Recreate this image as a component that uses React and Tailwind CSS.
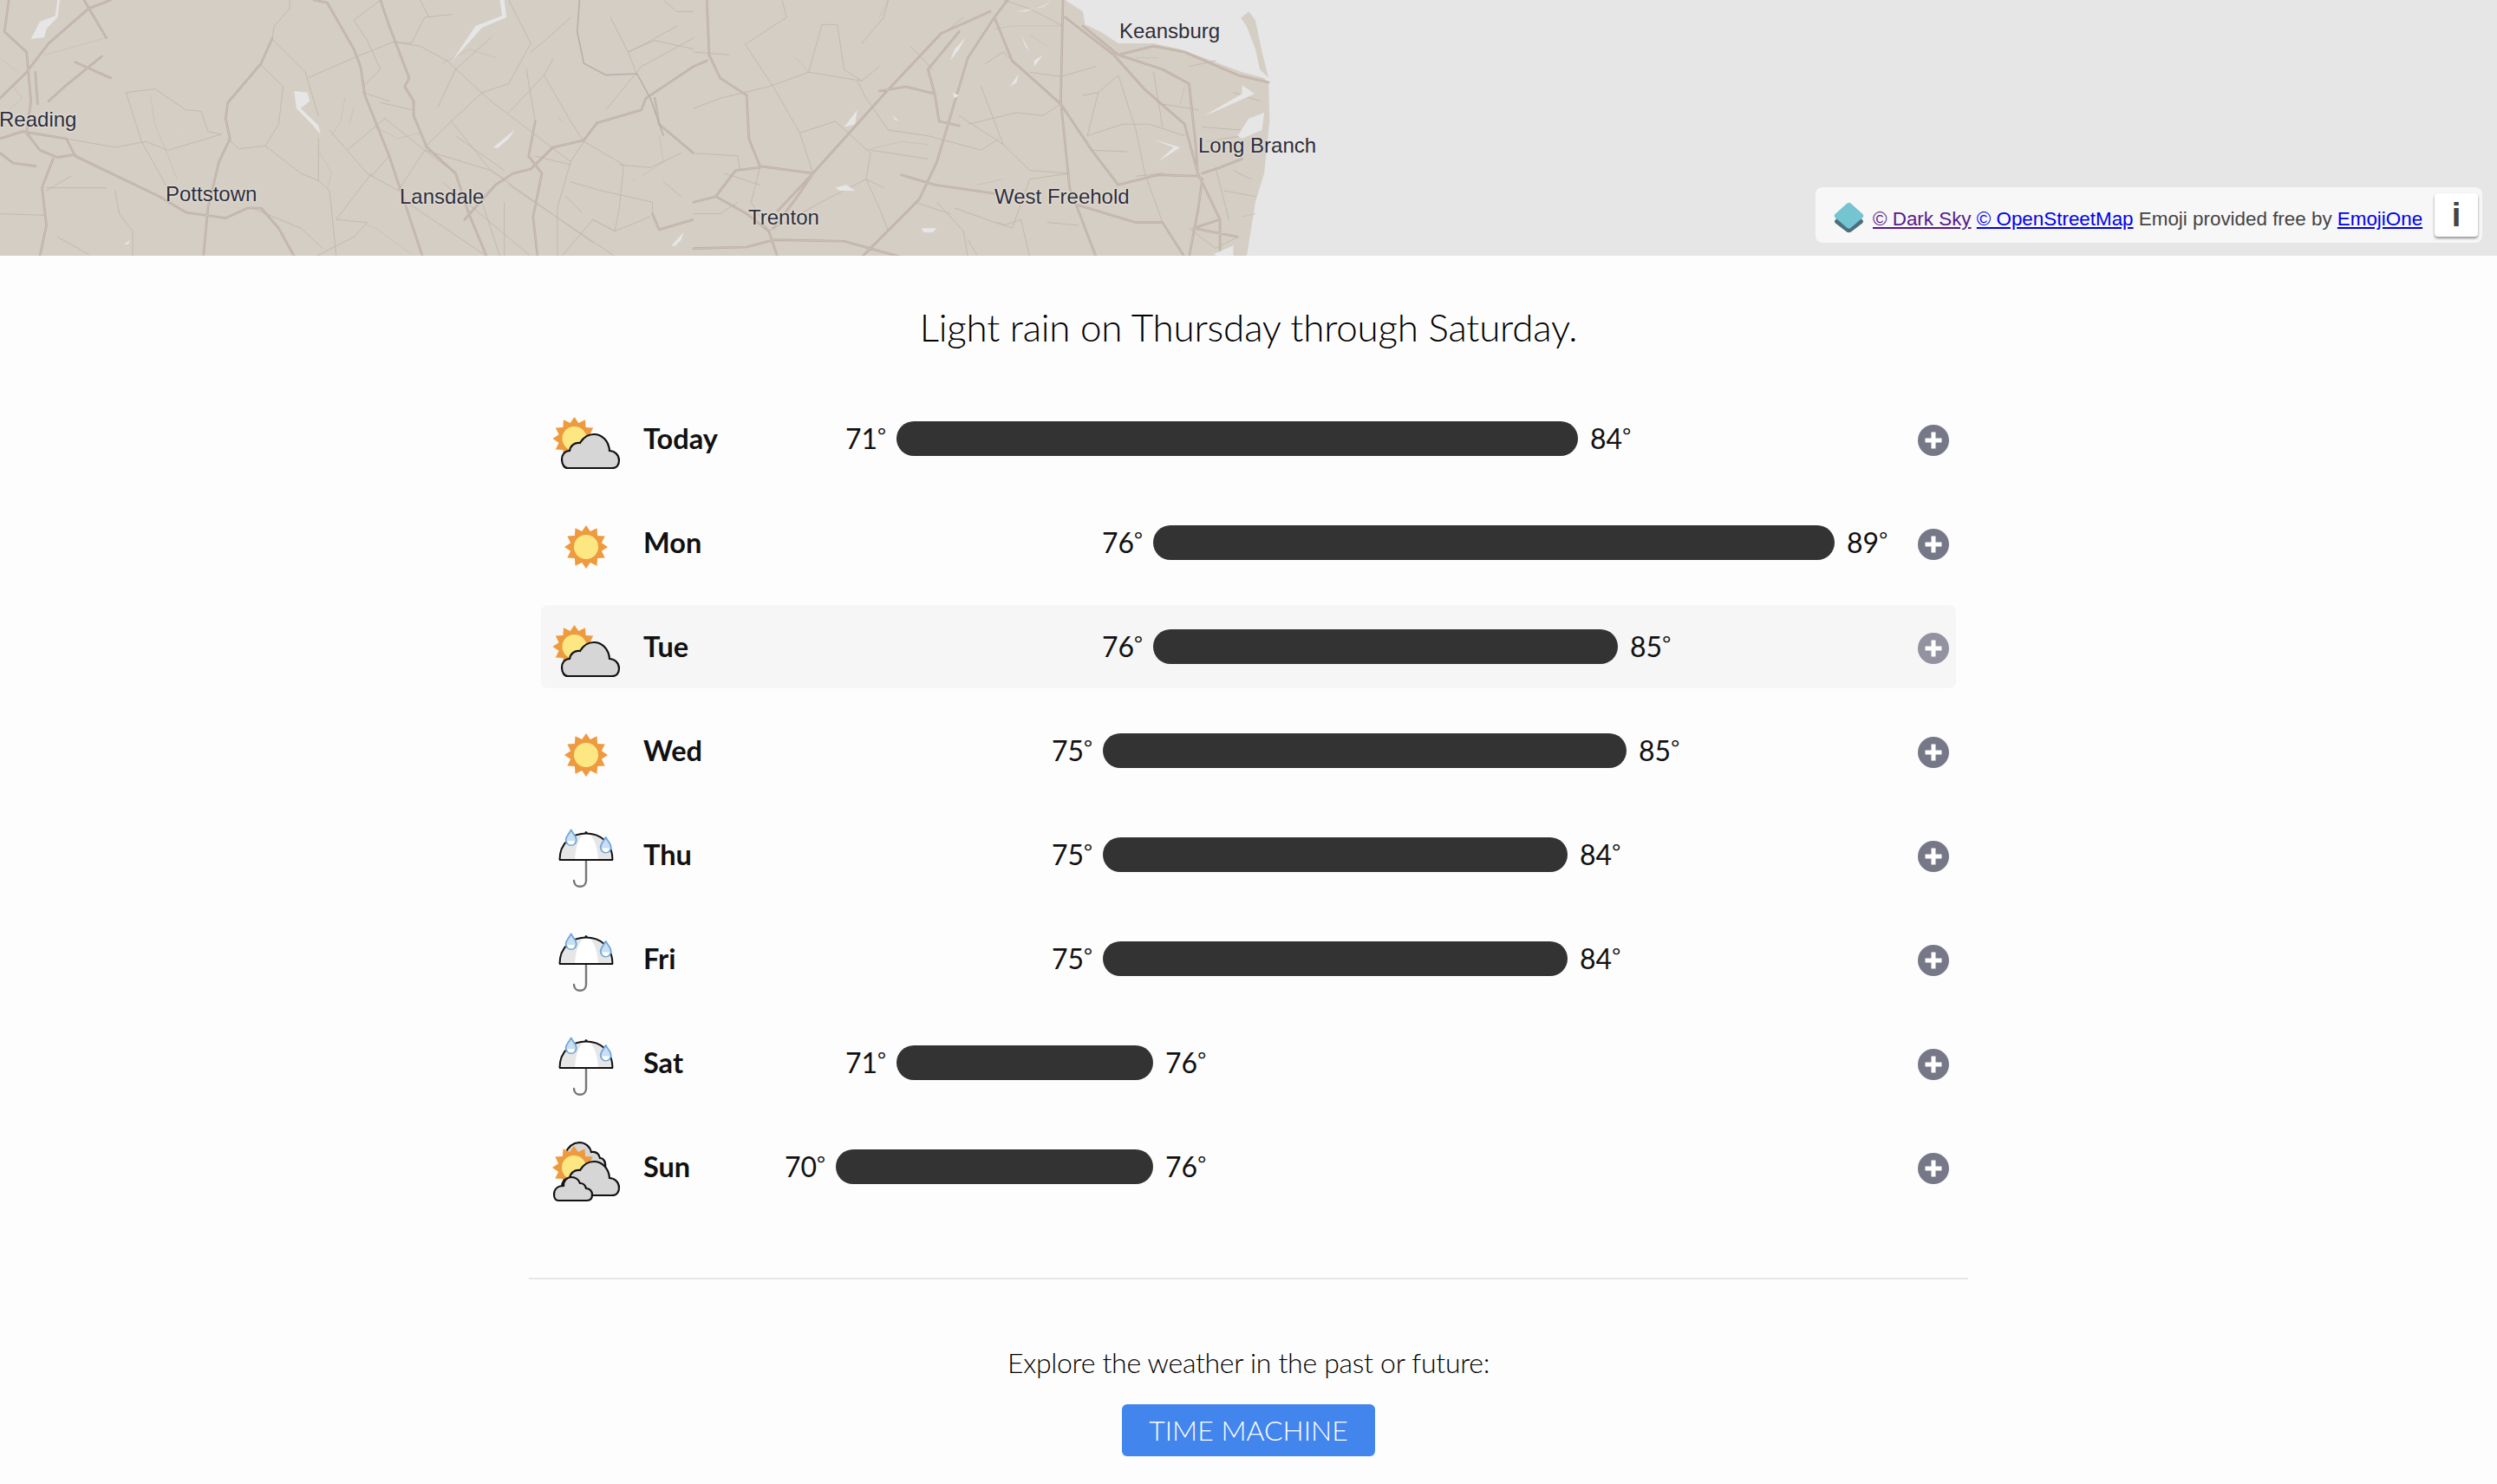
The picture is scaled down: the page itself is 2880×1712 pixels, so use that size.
import React from 'react';

// map traces, in the coordinates of two 800px-wide tiles (x / 1.96, y / 3)
const westMajor = 'M0 340L60 250L110 150L200 30L250 0M190 0L240 130M20 0L10 110L60 180L70 350L60 460M80 250L85 360M170 215L250 270M110 350L150 295L230 195M0 480L50 455L150 480L170 540L360 680L420 735L510 755L560 720L590 720L630 790L665 887M60 460L90 520L130 545L170 535M0 530L30 565L80 575M120 550L95 650L105 780L90 887M615 135L590 220L515 355L510 410L520 480L495 560L470 720L460 887M710 0L740 10L800 170L815 230L825 330L880 540L955 887M860 0L880 90L925 270L915 300L935 350L935 400L965 510L1030 600L1060 740L1100 887M1050 760L1120 640L1160 600L1200 585L1250 510L1320 485L1350 425L1450 380L1460 340L1568 230M1210 420L1195 540L1225 600L1205 750L1215 887M1475 740L1490 795L1568 760M1480 340L1490 430L1568 530';
const westMinor = 'M285 320L350 308L420 380L455 385L470 455L500 465M150 480L260 510L330 490L380 520L500 465M285 320L320 490L375 640M620 90L655 30L655 0M620 90L615 135L690 250L720 400M590 225L640 300L630 430L600 505L540 515L515 480M695 270L800 200L890 145L950 160L1010 210L1110 350L1290 560M890 145L930 150L960 60L1020 50M600 505L680 600L720 625L745 660L760 887M720 480L720 625M745 450L830 600L900 660M870 410L960 520L1110 590M860 355L930 380M820 320L880 350M785 520L870 410M990 370L1030 240L1110 130M1020 420L1090 320L1150 290L1200 150L1150 0M1020 420L960 510M1020 420L1110 590L1140 620M1150 390L1230 260L1250 205M1190 240L1210 420M1230 260L1290 420L1320 490L1290 560L1260 720L1260 887M1320 490L1410 570L1400 720L1390 800L1340 760L1270 887M1370 380L1450 230L1570 130M1420 180L1480 140L1568 170M1400 570L1470 580L1540 530M900 660L960 520L1030 600M840 600L760 760L830 770L800 820L715 887M880 540L840 610M920 700L1100 887M1000 630L1200 887M1110 590L1340 840M1150 640L1390 887M1280 680L1315 735M1290 630L1360 660L1475 700L1475 740M260 660L270 740L300 800L300 887M0 740L100 745M105 650L240 650M160 610L105 660M130 820L200 880M570 720L680 790L730 860M860 0L800 70L830 140L860 240L820 300M950 0L970 60M1290 60L1240 130L1200 180M1380 60L1420 180L1440 260M1500 0L1530 40L1568 40M1530 90L1460 150L1420 180M1030 470L1140 590M1210 540L1290 570M1340 760L1390 800L1470 750M1500 630L1540 680M1090 700L1130 887M1140 700L1140 887';
const westFaint = 'M340 330L350 430L380 540L400 620M100 190L150 170L240 130M0 200L40 250M30 300L50 340L20 380M780 340L770 420L750 470M800 370L790 430M850 440L900 480L950 460M720 520L750 600L740 650M930 880L850 790L830 780M1260 400L1270 420M1430 620L1435 630M1490 470L1500 560L1450 610M1120 200L1060 170L1000 220';
const westWater = 'M70 135L90 75L125 55L130 0L135 0L130 60L105 100L100 130ZM1020 215L1075 90L1135 55L1130 0L1140 0L1145 60L1090 95L1035 190ZM665 315L695 320L700 350L680 375L720 435L725 465L705 430L670 375ZM1115 510L1165 448L1150 480L1125 512ZM1518 850L1545 805L1540 830L1525 852ZM395 465L405 455L398 463ZM280 845L295 830L290 845Z';

const eastMajor = 'M30 0L35 190L60 270L120 330L125 480L150 575L270 600L230 690L180 790M0 230L30 210M0 700L50 680L95 590L150 580M50 680L120 740L170 800L190 890M0 860L120 855L180 830L340 835L470 890M670 40L560 115L440 310L270 600L190 730M710 0L680 60L620 200L550 560L510 690L380 890M680 60L720 210L830 360L900 520L960 640M835 0L830 350L850 650L870 730L910 890M420 315L480 300L545 325L555 420L600 435M545 325L530 240L600 110M470 605L545 640L680 670M870 710L1000 770L1060 770L1110 890M960 640L1050 605L1140 610L1150 620L1140 730L1120 890M840 60L950 190L1020 310L1110 430L1140 600L1190 760L1190 890M880 90L960 190L1060 240L1120 290L1135 500L1140 610M960 190L1040 160L1110 180L1230 260L1300 285M1130 790L1230 820M1130 790L1190 760M1150 600L1190 580L1240 550';
const eastMinor = 'M115 150L180 300L240 460L270 600M260 250L290 85L325 85L340 240L380 280L420 230M0 375L60 340L170 300L260 250L380 280M370 280L390 340L440 450L530 470L650 520L690 480M400 520L530 550M320 420L400 530L390 620L420 720M150 580L130 700L170 800L300 690L390 620L430 650M0 530L100 540L105 590M490 160L540 240M600 400L700 500L760 590L850 600M650 300L700 500M660 220L700 180L720 210M760 250L830 265L910 230M620 430L730 390L790 400L830 360M880 330L915 320L890 470L970 430L1030 430L1110 470M915 320L960 260L1000 450L1020 600L1060 770M900 520L980 525M690 770L720 790L760 620L850 600M590 720L700 780L740 760L760 890M550 700L610 800L620 890M1040 250L1060 440M1120 230L1180 210M1150 440L1240 450M1180 580L1210 760M1060 360L1140 380M1220 590L1260 620M1120 790L1180 860L1230 820M700 0L760 30L835 90M570 110L610 60M440 0L430 60L380 150M200 0L210 60L120 150M0 180L80 190M240 460L320 420M150 640L70 600M0 740L60 740L100 700M420 720L440 800M500 700L580 740M1000 610L1060 600M640 880L620 830M1220 320L1280 350M1160 490L1240 470M1200 660L1270 680M800 770L870 780';
const eastFaint = 'M390 520L470 490L530 500M680 100L720 90L830 90M760 120L800 160M420 60L440 0M1240 750L1270 740M1000 200L1050 200M1110 300L1100 360M640 640L700 620M230 200L260 250';
const eastWater = 'M1155 400L1240 325L1240 295L1268 325L1180 385ZM1230 470L1255 410L1290 390L1285 450L1240 480ZM1035 480L1100 510L1050 560L1085 510ZM320 650L345 640L365 660L330 660ZM515 790L550 790L540 805L520 805ZM585 320L600 330L590 340ZM715 300L735 255L730 285ZM590 170L615 130L600 170L580 210ZM340 440L370 380L365 430ZM730 40L790 25L810 0L790 20L750 40ZM1175 880L1220 850L1220 890L1190 890ZM740 120L760 180L750 160ZM450 400L465 420L455 415ZM770 210L790 190L770 230Z';
const eastLand = 'M0 0H840L880 40L885 85L920 110L960 150L1040 150L1100 170L1180 215L1240 250L1290 270L1300 290L1302 420L1290 600L1270 700L1250 890H0ZM1237 62L1255 40L1270 70L1285 180L1300 270L1280 240L1270 170L1250 90Z';

const mapLabels = [
  { name: 'Reading', pos: 'left-[-1px] top-[124px]' },
  { name: 'Pottstown', pos: 'left-[191px] top-[210px]' },
  { name: 'Lansdale', pos: 'left-[461px] top-[213px]' },
  { name: 'Trenton', pos: 'left-[863px] top-[237px]' },
  { name: 'West Freehold', pos: 'left-[1147px] top-[213px]' },
  { name: 'Keansburg', pos: 'left-[1291px] top-[22px]' },
  { name: 'Long Branch', pos: 'left-[1382px] top-[154px]' },
];

const days = [
  { day: 'Today', icon: 'partly', low: 71, high: 84, left: 1034, right: 1820 },
  { day: 'Mon', icon: 'sun', low: 76, high: 89, left: 1330, right: 2116 },
  { day: 'Tue', icon: 'partly', low: 76, high: 85, left: 1330, right: 1866, active: true },
  { day: 'Wed', icon: 'sun', low: 75, high: 85, left: 1272, right: 1876 },
  { day: 'Thu', icon: 'rain', low: 75, high: 84, left: 1272, right: 1808 },
  { day: 'Fri', icon: 'rain', low: 75, high: 84, left: 1272, right: 1808 },
  { day: 'Sat', icon: 'rain', low: 71, high: 76, left: 1034, right: 1330 },
  { day: 'Sun', icon: 'cloudy', low: 70, high: 76, left: 964, right: 1330 },
];

const Roads = ({ major, minor, faint, water }) => (
  <g fill="none" strokeLinejoin="round" strokeLinecap="round">
    <path d={faint} stroke="#cabfb5" strokeWidth="0.9" vectorEffect="non-scaling-stroke" />
    <path d={minor} stroke="#c2b6ac" strokeWidth="0.9" vectorEffect="non-scaling-stroke" />
    <path d={major} stroke="#bdaea5" strokeWidth="2.6" vectorEffect="non-scaling-stroke" />
    <path d={major} stroke="#d0c6bc" strokeWidth="0.8" vectorEffect="non-scaling-stroke" />
    <path d={water} fill="#e6e6e6" stroke="none" />
  </g>
);

const MapDrawing = () => (
  <svg className="absolute inset-0" width="2880" height="295">
    <rect x="0" y="0" width="800" height="295" fill="#d5cec4" />
    <g transform="scale(0.5102 0.3333)">
      <Roads major={westMajor} minor={westMinor} faint={westFaint} water={westWater} />
      <path
        d="M1310 0L1305 110L1320 220L1370 260L1440 255L1470 340L1500 470"
        fill="none"
        stroke="#b3b1ad"
        strokeWidth="1.6"
        vectorEffect="non-scaling-stroke"
      />
    </g>
    <g transform="translate(800 0) scale(0.5102 0.3333)">
      <path d={eastLand} fill="#d5cec4" />
      <Roads major={eastMajor} minor={eastMinor} faint={eastFaint} water={eastWater} />
    </g>
  </svg>
);

const sunPoints = (cx, cy, outer, inner) => {
  const pts = [];
  for (let i = 0; i < 24; i++) {
    const r = i % 2 === 0 ? outer : inner;
    const a = (i * Math.PI) / 12 - Math.PI / 2;
    pts.push(`${(cx + r * Math.cos(a)).toFixed(1)},${(cy + r * Math.sin(a)).toFixed(1)}`);
  }
  return pts.join(' ');
};

const Sun = ({ cx, cy }) => (
  <g>
    <polygon points={sunPoints(cx, cy, 25, 18.5)} fill="#ee9a3e" />
    <circle cx={cx} cy={cy} r="14" fill="#fde783" />
  </g>
);

const bigCloud = 'M19 69H70C76 69 78 64 78 60C78 54 73 49 67 49C66 37 58 30 49 30C41 30 36 35 33 40C27 39 22 43 21 49C15 49 12 54 12 59C12 65 15 69 19 69Z';

const Drop = ({ x, y }) => (
  <g>
    <path
      d={`M${x} ${y}C${x + 1} ${y + 4} ${x + 6} ${y + 7} ${x + 6} ${y + 12}A6 6 0 0 1 ${x - 6} ${y + 12}C${x - 6} ${y + 7} ${x - 1} ${y + 4} ${x} ${y}Z`}
      fill="#c9dff1"
      stroke="#6fa7da"
      strokeWidth="1.8"
    />
    <path d={`M${x - 4.5} ${y + 13}H${x + 4.5}A4.5 4.5 0 0 1 ${x - 4.5} ${y + 13}Z`} fill="#ffffff" />
  </g>
);

const WeatherIcon = ({ type }) => (
  <svg className="mt-[10px] shrink-0" width="80" height="80" viewBox="0 0 80 80">
    {type === 'sun' && <Sun cx={40} cy={40} />}
    {type === 'partly' && (
      <g>
        <Sun cx={26.500} cy={35} />
        <path d={bigCloud} fill="#d6d6d6" stroke="#111111" strokeWidth="2.2" />
      </g>
    )}
    {type === 'rain' && (
      <g>
        <path d="M40 41V65C40 74 26 74 26 65" fill="none" stroke="#777777" strokeWidth="2.4" strokeLinecap="round" />
        <path d="M9.5 41C9.5 21 24 10.5 40 10.5C56 10.5 70.500 21 70.500 41Z" fill="#e6e6e6" />
        <path d="M27 41C28 22 34 11 40 11C47 11 53 22 54 41Z" fill="#ffffff" />
        <path d="M9.5 41C9.500 21 24 10.5 40 10.5C56 10.5 70.500 21 70.500 41M9 41H71" fill="none" stroke="#111111" strokeWidth="2" />
        <circle cx="40" cy="9.500" r="1.500" fill="#111111" />
        <Drop x={22.700} y={6} />
        <Drop x={62.700} y={14.500} />
      </g>
    )}
    {type === 'cloudy' && (
      <g>
        <path d="M14 40C12 28 16 8 32 7C40 7 45 13 46 18C52 17 55 21 56 25C60 25 63 29 62 36Z" fill="#d6d6d6" stroke="#111111" strokeWidth="2.2" />
        <Sun cx={26} cy={36} />
        <path d={bigCloud} fill="#d6d6d6" stroke="#111111" strokeWidth="2.2" transform="translate(0 -1)" />
        <path d="M8 74H41C45 74 47 71 47 67C47 63 44 60 40 60C39 56 36 54 33 54C31 49 27 47 23 47C17 47 14 52 14 57C7 57 3 61 3 67C3 71 5 74 8 74Z" fill="#d6d6d6" stroke="#111111" strokeWidth="2.2" />
      </g>
    )}
  </svg>
);

const PlusIcon = ({ active }) => (
  <svg className="mt-1 shrink-0" width="36" height="36" viewBox="0 0 36 36">
    <circle cx="18" cy="18" r="18" fill={active ? '#9292a0' : '#767888'} />
    <path d="M18 8.500V27.500M8.500 18H27.500" stroke="#ffffff" strokeWidth="5" />
  </svg>
);

const Temp = ({ value }) => (
  <>
    {value}
    <span className="align-[7px] text-[24px] leading-none">°</span>
  </>
);

const DayRow = ({ day, icon, low, high, left, right, active }) => (
  <div className={`flex h-24 items-center rounded-lg pl-3 pr-2 ${active ? 'bg-[#f6f6f6]' : ''}`}>
    <WeatherIcon type={icon} />
    <div className="ml-[26px] w-[120px] shrink-0 text-[32.5px] font-bold text-[#111]">{day}</div>
    <div className="flex min-w-0 flex-1 items-center text-[32px] text-[#111]" style={{ marginLeft: left - 944 }}>
      <span className="w-[70px] shrink-0 text-right"><Temp value={low} /></span>
      <div className="ml-[12px] h-10 shrink-0 rounded-[20px] bg-[#333333]" style={{ width: right - left }} />
      <span className="ml-[14px] shrink-0"><Temp value={high} /></span>
    </div>
    <PlusIcon active={active} />
  </div>
);

const App = () => {
  return (
    <div className="min-h-screen bg-[#fdfdfd] font-['Lato',sans-serif]">
      {/* Map */}
      <div className="relative h-[295px] overflow-hidden bg-[#e6e6e6]">
        <MapDrawing />
        {mapLabels.map((label) => (
          <span
            key={label.name}
            className={`absolute whitespace-nowrap font-['Liberation_Sans',sans-serif] text-[24px] leading-[28px] text-[#2c2e40] [text-shadow:0_0_3px_#eee8de,0_0_2px_#eee8de] ${label.pos}`}
          >
            {label.name}
          </span>
        ))}

        <div className="absolute left-[2094px] top-[216px] flex h-16 w-[769px] items-center rounded-lg bg-[#f7f7f7] pl-[21px] pr-[5px] font-['Liberation_Sans',sans-serif] text-[22.4px] text-[#444]">
          <svg className="mt-[6px] shrink-0" width="35" height="36" viewBox="0 0 35 36">
            <path d="M17.500 5L33 20.500Q35 22.500 33 24.500L20 34.500Q17.500 36 15 34.500L2 24.500Q0 22.500 2 20.500Z" fill="#4b6f7c" />
            <path d="M15.500 1.500Q17.500 0 19.500 1.500L33.500 14Q35 16 33.500 18L19.500 30Q17.500 31.500 15.500 30L1.500 18Q0 16 1.500 14Z" fill="#74c4d2" />
          </svg>
          <div className="ml-[10px] mt-[10px] whitespace-nowrap">
            <a href="#dark-sky" className="text-[#551a8b] underline">© Dark Sky</a>{' '}
            <a href="#osm" className="text-[#0000ee] underline">© OpenStreetMap</a>{' '}
            Emoji provided free by{' '}
            <a href="#emojione" className="text-[#0000ee] underline">EmojiOne</a>
          </div>
          <div className="ml-auto flex h-[50px] w-[50px] shrink-0 items-center justify-center rounded bg-white text-[38px] font-bold leading-none text-[#444] shadow-[0_2px_3px_rgba(0,0,0,0.4)]">
            i
          </div>
        </div>
      </div>

      <div className="flex flex-col items-center">
        {/* Summary */}
        <h1 className="mt-[52px] text-[44px] font-light leading-[60px] tracking-[-0.22px] text-black">
          Light rain on Thursday through Saturday.
        </h1>

        {/* Daily forecast */}
        <div className="mt-[51px] flex w-[1632px] flex-col gap-6">
          {days.map((d) => (
            <DayRow key={d.day} {...d} />
          ))}
        </div>

        <div className="mt-20 h-[2px] w-[1660px] bg-[#e6e6e6]" />

        {/* Time machine */}
        <p className="mt-[76px] text-[32px] font-light leading-10 tracking-[-0.3px] text-black">
          Explore the weather in the past or future:
        </p>
        <button className="mb-8 mt-7 h-[60px] w-[292px] rounded-md bg-[#4285ed] text-[32px] font-light text-white">
          TIME MACHINE
        </button>
      </div>
    </div>
  );
};

export default App;
